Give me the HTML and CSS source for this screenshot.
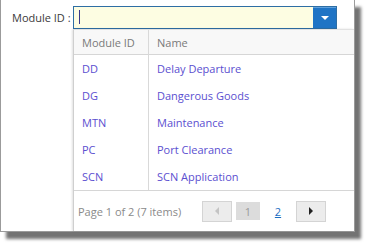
FILE: index.html
```html
<!DOCTYPE html>
<html>
<head>
<meta charset="utf-8">
<link rel="stylesheet" href="styles.css">
</head>
<body>
<div class="window">
  <div class="field-row">
    <label class="label">Module ID :</label>
    <div class="combo">
      <div class="combo-input"><span class="caret"></span></div>
      <div class="combo-btn"><span class="tri-down"></span></div>
    </div>
  </div>
  <div class="popup">
    <div class="grid">
      <div class="cell head c1">Module ID</div>
      <div class="cell head c2">Name</div>
      <div class="cell c1">DD</div><div class="cell c2">Delay Departure</div>
      <div class="cell c1">DG</div><div class="cell c2">Dangerous Goods</div>
      <div class="cell c1">MTN</div><div class="cell c2">Maintenance</div>
      <div class="cell c1">PC</div><div class="cell c2">Port Clearance</div>
      <div class="cell c1">SCN</div><div class="cell c2">SCN Application</div>
    </div>
    <div class="pager">
      <span class="summary">Page 1 of 2 (7 items)</span>
      <div class="pages">
        <span class="pbtn disabled"><span class="tri-left"></span></span>
        <span class="pnum current">1</span>
        <a class="pnum link">2</a>
        <span class="pbtn"><span class="tri-right"></span></span>
      </div>
    </div>
  </div>
</div>
</body>
</html>
```
FILE: styles.css
```css
html, body {
  margin: 0;
  padding: 0;
  background: #fff;
}
body {
  width: 371px;
  height: 247px;
  overflow: hidden;
  font-family: "Open Sans", "Noto Sans", sans-serif;
  font-size: 11px;
}
.window {
  width: 353px;
  height: 231px;
  border: 1px solid #9b9b9b;
  border-top: none;
  background: #fff;
  box-shadow: 6px 7px 3px rgba(0,0,0,0.55);
  display: flex;
  flex-direction: column;
}
.field-row {
  display: flex;
  align-items: center;
  padding: 5px 0 0 11px;
  height: 24px;
}
.label {
  color: #3a3a3a;
  width: 61px;
}
.combo {
  display: flex;
  width: 262px;
  height: 21px;
  border: 1px solid #2e6ea4;
  background: #fdfde2;
}
.combo-input {
  flex: 1;
  display: flex;
  align-items: center;
  padding-left: 5px;
}
.caret {
  width: 1px;
  height: 14px;
  background: #3b3a8c;
}
.combo-btn {
  width: 23px;
  background: #1f74c5;
  border-top: 1px solid #5fa0dc;
  display: flex;
  align-items: center;
  justify-content: center;
}
.tri-down {
  width: 0;
  height: 0;
  border-left: 4px solid transparent;
  border-right: 4px solid transparent;
  border-top: 4px solid #fff;
}
.popup {
  margin-left: 72px;
  flex: 1;
  border-left: 1px solid #cfcfcf;
  border-top: 1px solid #e2e2e2;
  box-shadow: -1px 0 2px rgba(0,0,0,0.12);
  display: flex;
  flex-direction: column;
}
.grid {
  display: grid;
  grid-template-columns: 75px 1fr;
  grid-auto-rows: 27px;
  grid-template-rows: 25px;
  border-bottom: 1px solid #d6d6d6;
}
.cell {
  display: flex;
  align-items: center;
  padding-left: 8px;
  color: #5b4fd0;
}
.cell.c1 {
  border-right: 1px solid #d9d9d9;
}
.cell.head {
  background: #f8f8f8;
  color: #7a7a7a;
  border-bottom: 1px solid #d6d6d6;
}
.pager {
  flex: 1;
  display: flex;
  align-items: center;
  padding: 0 28px 0 4px;
}
.summary {
  color: #8a8a8a;
}
.pages {
  margin-left: auto;
  display: flex;
  align-items: center;
}
.pbtn {
  width: 28px;
  height: 19px;
  border: 1px solid #d4d4d4;
  background: #ececec;
  display: flex;
  align-items: center;
  justify-content: center;
}
.pnum {
  width: 24px;
  height: 18px;
  display: flex;
  align-items: center;
  justify-content: center;
  color: #9a9a9a;
}
.pnum.current {
  background: #dcdcdc;
  margin-left: 4px;
}
.pnum.link {
  color: #1d6ec2;
  text-decoration: underline;
  margin: 0 6px;
}
.tri-left {
  width: 0;
  height: 0;
  border-top: 4px solid transparent;
  border-bottom: 4px solid transparent;
  border-right: 4px solid #c4c4c4;
}
.tri-right {
  width: 0;
  height: 0;
  border-top: 4px solid transparent;
  border-bottom: 4px solid transparent;
  border-left: 4px solid #222;
}
```
